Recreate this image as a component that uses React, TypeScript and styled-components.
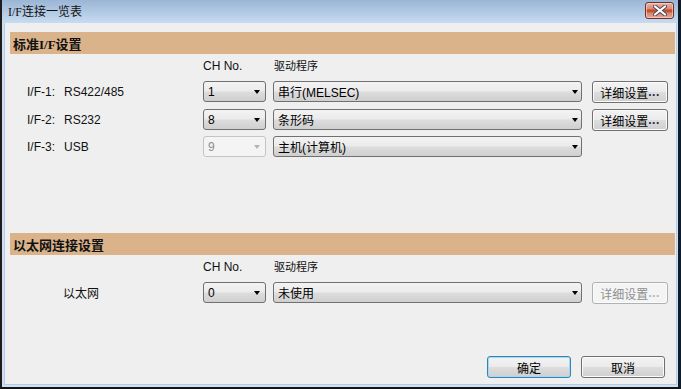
import React from 'react';
import styled, { createGlobalStyle, css } from 'styled-components';

const Global = createGlobalStyle`
  html, body { margin: 0; padding: 0; width: 681px; height: 389px; overflow: hidden; background: #efefef; }
  body { font-family: "Liberation Sans", "Noto Sans CJK SC", sans-serif; font-size: 12px; color: #000; }
  * { box-sizing: border-box; }
`;

const Window = styled.div`
  width: 681px;
  height: 389px;
  display: flex;
  flex-direction: column;
  border-left: 2px solid #1c1c1c;
  border-right: 3px solid #0f1b2b;
  border-bottom: 2px solid #141414;
  background: #dde8f4;
`;

const TitleBar = styled.div`
  height: 23px;
  flex: none;
  display: flex;
  align-items: center;
  justify-content: space-between;
  padding: 0 4px 0 6px;
  background: linear-gradient(#9bb5d5, #c7dcf1);
`;

const TitleText = styled.span`
  font-family: "Liberation Serif", "Noto Sans CJK SC", serif;
  font-size: 12px;
  color: #111;
  margin-top: -1px;
`;

const CloseButton = styled.div`
  width: 29px;
  height: 17px;
  margin-top: -2px;
  border: 1px solid #6e3228;
  border-radius: 3px;
  display: flex;
  align-items: center;
  justify-content: center;
  background: linear-gradient(#eab2a6 0%, #d98a77 40%, #c4522f 45%, #c4522f 60%, #d5826c 65%, #e9a797 100%);
  box-shadow: inset 0 0 0 1px rgba(255, 220, 210, 0.6);
`;

const Frame = styled.div`
  flex: 1;
  display: flex;
  padding: 0 1px 2px 2px;
  background: #cfe0f2;
`;

const Body = styled.div`
  flex: 1;
  display: flex;
  flex-direction: column;
  background: #efefef;
  border: 1px solid #b3cbe6;
  border-top: none;
`;

const SectionHeader = styled.div<{ $top: number }>`
  height: 22px;
  margin: ${(p) => p.$top}px 1px 0 5px;
  padding-left: 3px;
  display: flex;
  align-items: center;
  background: #dab38a;
  font-family: "Liberation Serif", "Noto Sans CJK SC", serif;
  font-weight: bold;
  font-size: 13px;
  color: #111;
`;

const Grid = styled.div`
  display: grid;
  grid-template-columns: 37px 139px 63px 316px 86px;
  column-gap: 0;
  padding-left: 22px;
`;

const ColHeader = styled(Grid)`
  margin-top: 5px;
  height: 14px;
  line-height: 14px;
  font-size: 12px;
  color: #111;
`;

const ColCH = styled.span`
  grid-column: 3;
`;

const ColDriver = styled.span`
  grid-column: 4;
  margin-left: 8px;
  font-size: 11px;
`;

const Rows = styled.div`
  margin-top: 7px;
  display: flex;
  flex-direction: column;
  gap: 7px;
`;

const Row = styled(Grid)`
  height: 21px;
  align-items: center;
`;

const Prefix = styled.span`
  color: #111;
`;

const Name = styled.span<{ $span?: boolean }>`
  color: #111;
  ${(p) =>
    p.$span &&
    css`
      grid-column: 1 / 3;
      padding-left: 36px;
    `}
`;

const Combo = styled.div<{ $disabled?: boolean; $wide?: boolean }>`
  grid-column: ${(p) => (p.$wide ? 4 : 3)};
  margin-left: ${(p) => (p.$wide ? 7 : 0)}px;
  height: 21px;
  display: flex;
  align-items: center;
  justify-content: space-between;
  padding: 0 ${(p) => (p.$wide ? 3 : 5)}px 0 4px;
  border: 1px solid ${(p) => (p.$disabled ? '#c2c4c6' : '#707070')};
  border-radius: 3px;
  color: ${(p) => (p.$disabled ? '#8d8d8d' : '#000')};
  background: ${(p) =>
    p.$disabled
      ? '#f4f4f4'
      : 'linear-gradient(#f3f3f3 0%, #ebebeb 48%, #dddddd 52%, #cfcfcf 100%)'};
`;

const Arrow = styled.span<{ $disabled?: boolean }>`
  width: 0;
  height: 0;
  border-left: 3.5px solid transparent;
  border-right: 3.5px solid transparent;
  border-top: 4px solid ${(p) => (p.$disabled ? '#b4b4b4' : '#000')};
  margin-top: 1px;
`;

const Button = styled.div<{ $disabled?: boolean; $default?: boolean; $col?: boolean }>`
  ${(p) =>
    p.$col &&
    css`
      grid-column: 5;
      margin-left: 10px;
      width: 76px;
      align-self: start;
      margin-top: 1px;
    `}
  height: 22px;
  display: flex;
  align-items: center;
  justify-content: center;
  border: 1px solid ${(p) => (p.$disabled ? '#adb2b5' : p.$default ? '#3c7fb1' : '#707070')};
  border-radius: 3px;
  color: ${(p) => (p.$disabled ? '#8f8f8f' : '#000')};
  background: ${(p) =>
    p.$disabled
      ? '#f4f4f4'
      : 'linear-gradient(#f3f3f3 0%, #ebebeb 48%, #dddddd 52%, #cfcfcf 100%)'};
  box-shadow: ${(p) => (p.$default ? 'inset 0 0 0 1px #9fdcf8' : 'inset 0 0 0 1px #fbfbfb')};
`;

const Dots = styled.span<{ $disabled?: boolean }>`
  color: ${(p) => (p.$disabled ? '#a8b4c4' : '#1a2a50')};
  font-weight: bold;
  letter-spacing: 0.5px;
`;

const Footer = styled.div`
  margin-top: auto;
  display: flex;
  justify-content: flex-end;
  gap: 10px;
  padding: 0 11px 6px 0;
`;

const FooterButton = styled(Button)`
  width: 84px;
`;

const Title = () => (
  <TitleBar>
    <TitleText>I/F连接一览表</TitleText>
    <CloseButton>
      <svg width="14" height="11" viewBox="0 0 14 11">
        <path d="M2 1.5 L12 9.5 M12 1.5 L2 9.5" stroke="#4a4a5a" strokeWidth="4" strokeLinecap="round" />
        <path d="M2 1.5 L12 9.5 M12 1.5 L2 9.5" stroke="#ffffff" strokeWidth="2.2" strokeLinecap="round" />
      </svg>
    </CloseButton>
  </TitleBar>
);

const ifRows = [
  { prefix: 'I/F-1:', name: 'RS422/485', ch: '1', driver: '串行(MELSEC)', detail: true, disabled: false },
  { prefix: 'I/F-2:', name: 'RS232', ch: '8', driver: '条形码', detail: true, disabled: false },
  { prefix: 'I/F-3:', name: 'USB', ch: '9', driver: '主机(计算机)', detail: false, disabled: true },
];

export default function App() {
  return (
    <>
      <Global />
      <Window>
        <Title />
        <Frame>
          <Body>
            <SectionHeader $top={9}>标准I/F设置</SectionHeader>
            <ColHeader>
              <ColCH>CH No.</ColCH>
              <ColDriver>驱动程序</ColDriver>
            </ColHeader>
            <Rows>
              {ifRows.map((r) => (
                <Row key={r.prefix}>
                  <Prefix>{r.prefix}</Prefix>
                  <Name>{r.name}</Name>
                  <Combo $disabled={r.disabled}>
                    <span>{r.ch}</span>
                    <Arrow $disabled={r.disabled} />
                  </Combo>
                  <Combo $wide>
                    <span>{r.driver}</span>
                    <Arrow />
                  </Combo>
                  {r.detail && (
                    <Button $col>
                      详细设置<Dots>...</Dots>
                    </Button>
                  )}
                </Row>
              ))}
            </Rows>

            <SectionHeader $top={76}>以太网连接设置</SectionHeader>
            <ColHeader>
              <ColCH>CH No.</ColCH>
              <ColDriver>驱动程序</ColDriver>
            </ColHeader>
            <Rows>
              <Row>
                <Name $span>以太网</Name>
                <Combo>
                  <span>0</span>
                  <Arrow />
                </Combo>
                <Combo $wide>
                  <span>未使用</span>
                  <Arrow />
                </Combo>
                <Button $col $disabled>
                  详细设置<Dots $disabled>...</Dots>
                </Button>
              </Row>
            </Rows>

            <Footer>
              <FooterButton $default>确定</FooterButton>
              <FooterButton>取消</FooterButton>
            </Footer>
          </Body>
        </Frame>
      </Window>
    </>
  );
}
